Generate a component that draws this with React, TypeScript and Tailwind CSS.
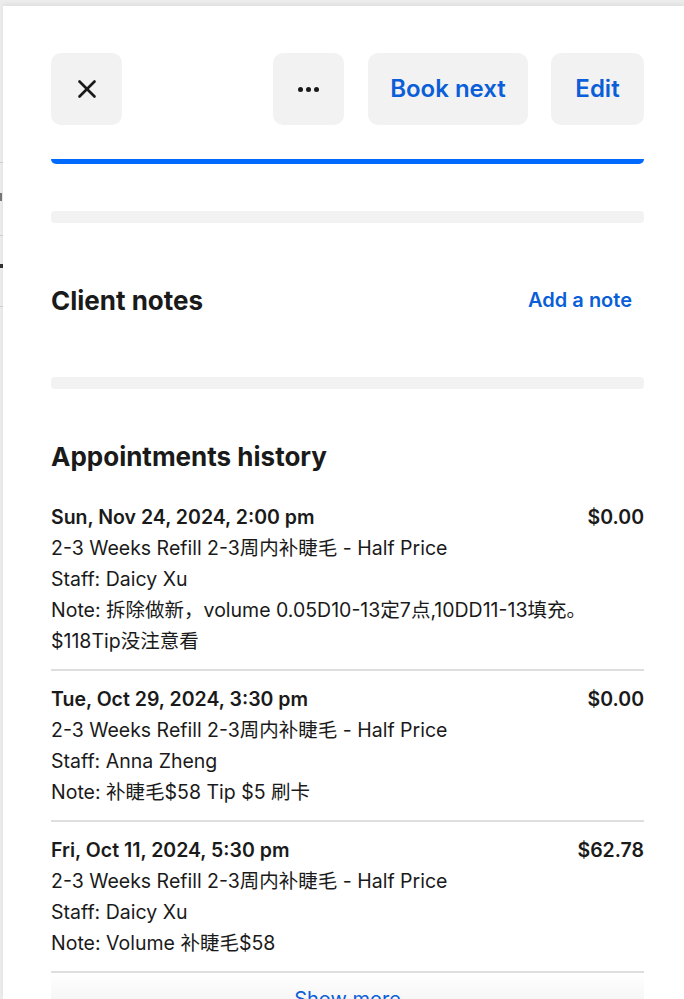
import { X } from "lucide-react";

const history = [
  {
    date: "Sun, Nov 24, 2024, 2:00 pm",
    price: "$0.00",
    service: "2-3 Weeks Refill 2-3周内补睫毛 - Half Price",
    staff: "Daicy Xu",
    note: ["拆除做新，volume 0.05D10-13定7点,10DD11-13填充。", "$118Tip没注意看"],
  },
  {
    date: "Tue, Oct 29, 2024, 3:30 pm",
    price: "$0.00",
    service: "2-3 Weeks Refill 2-3周内补睫毛 - Half Price",
    staff: "Anna Zheng",
    note: ["补睫毛$58 Tip $5 刷卡"],
  },
  {
    date: "Fri, Oct 11, 2024, 5:30 pm",
    price: "$62.78",
    service: "2-3 Weeks Refill 2-3周内补睫毛 - Half Price",
    staff: "Daicy Xu",
    note: ["Volume 补睫毛$58"],
  },
];

export default function App() {
  return (
    <div className="flex h-[999px] w-[684px] overflow-hidden bg-[#ececec] font-['Inter','Noto_Sans_CJK_SC',sans-serif] text-[#1a1a1a]">
      {/* page behind the drawer */}
      <div className="flex w-[3px] shrink-0 flex-col pt-[162px]">
        <div className="h-px bg-[#cfcfcf]" />
        <div className="mt-[30px] h-[8px] w-[2px] bg-[#777]" />
        <div className="mt-[34px] h-px bg-[#cfcfcf]" />
        <div className="mt-[28px] h-[4px] w-[3px] bg-[#333]" />
        <div className="mt-[38px] h-px bg-[#cfcfcf]" />
      </div>

      <div className="relative mt-[6px] flex min-h-0 flex-1 flex-col bg-white pl-[48px] pr-[40px] shadow-[0_-2px_4px_rgba(0,0,0,0.06)] [&>*]:shrink-0">
        <div className="mt-[47px] flex h-[72px] items-stretch gap-[24px]">
          <button className="flex w-[71px] items-center justify-center rounded-[10px] bg-[#f2f2f2]">
            <X size={30} strokeWidth={2.1} className="text-[#1a1a1a]" />
          </button>
          <div className="flex-1" />
          <button className="flex w-[71px] items-center justify-center gap-[3px] rounded-[10px] bg-[#f2f2f2]">
            <span className="h-[5px] w-[5px] rounded-full bg-[#1a1a1a]" />
            <span className="h-[5px] w-[5px] rounded-full bg-[#1a1a1a]" />
            <span className="h-[5px] w-[5px] rounded-full bg-[#1a1a1a]" />
          </button>
          <button className="w-[160px] rounded-[10px] bg-[#f2f2f2] text-[24px] font-semibold text-[#0a5fd8]">
            Book next
          </button>
          <button className="-ml-[1px] w-[93px] rounded-[10px] bg-[#f2f2f2] text-[24px] font-semibold text-[#0a5fd8]">
            Edit
          </button>
        </div>

        <div className="mt-[34px] h-[5px] rounded-b-[6px] bg-[#006aff]" />

        <div className="mt-[47px] h-[12px] rounded-[4px] bg-[#f2f2f2]" />

        <div className="mt-[61px] flex h-[32px] items-center justify-between">
          <h2 className="text-[26px] font-bold">Client notes</h2>
          <button className="pr-[12px] text-[20px] font-semibold text-[#0a5fd8]">Add a note</button>
        </div>

        <div className="mt-[61px] h-[12px] rounded-[4px] bg-[#f2f2f2]" />

        <h2 className="mt-[52px] text-[26px] leading-[32px] font-bold">Appointments history</h2>

        <div className="mt-[16px] flex flex-col">
          {history.map((a) => (
            <div key={a.date} className="border-b-2 border-[#dedede] pt-[13px] pb-[12px] text-[19.5px] leading-[31px]">
              <div className="flex justify-between font-semibold">
                <span>{a.date}</span>
                <span>{a.price}</span>
              </div>
              <div>{a.service}</div>
              <div>Staff: {a.staff}</div>
              <div>
                Note: {a.note[0]}
                {a.note[1] && (
                  <>
                    <br />
                    {a.note[1]}
                  </>
                )}
              </div>
            </div>
          ))}
        </div>

        <div className="flex flex-1 justify-center bg-gradient-to-b from-white to-[#f2f2f2] pt-[14px]">
          <button className="text-[20px] leading-[24px] text-[#0a5fd8]">Show more</button>
        </div>
      </div>
    </div>
  );
}
